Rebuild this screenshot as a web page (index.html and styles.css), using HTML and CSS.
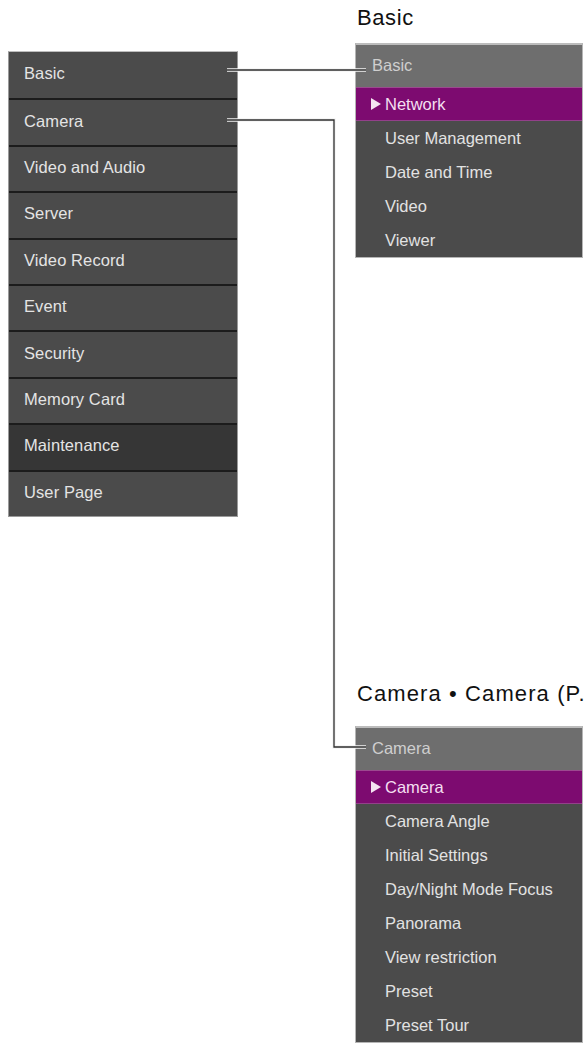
FILE: index.html
```html
<!DOCTYPE html>
<html lang="en">
<head>
<meta charset="utf-8">
<title>Menu structure</title>
<link rel="stylesheet" href="styles.css">
</head>
<body>
<div class="page">
  <nav class="main-menu">
    <div class="main-item">Basic</div>
    <div class="main-item">Camera</div>
    <div class="main-item">Video and Audio</div>
    <div class="main-item">Server</div>
    <div class="main-item">Video Record</div>
    <div class="main-item">Event</div>
    <div class="main-item">Security</div>
    <div class="main-item">Memory Card</div>
    <div class="main-item main-item--active">Maintenance</div>
    <div class="main-item">User Page</div>
  </nav>

  <div class="sub-column">
    <section class="sub-group sub-group--basic">
      <h2 class="sub-title">Basic</h2>
      <div class="sub-panel">
        <div class="sub-header">Basic</div>
        <div class="sub-item sub-item--selected"><span class="arrow"></span>Network</div>
        <div class="sub-item">User Management</div>
        <div class="sub-item">Date and Time</div>
        <div class="sub-item">Video</div>
        <div class="sub-item">Viewer</div>
      </div>
    </section>

    <section class="sub-group sub-group--camera">
      <h2 class="sub-title sub-title--wide">Camera • Camera (P.</h2>
      <div class="sub-panel">
        <div class="sub-header">Camera</div>
        <div class="sub-item sub-item--selected"><span class="arrow"></span>Camera</div>
        <div class="sub-item">Camera Angle</div>
        <div class="sub-item">Initial Settings</div>
        <div class="sub-item">Day/Night Mode Focus</div>
        <div class="sub-item">Panorama</div>
        <div class="sub-item">View restriction</div>
        <div class="sub-item">Preset</div>
        <div class="sub-item">Preset Tour</div>
      </div>
    </section>
  </div>

  <svg class="connectors" width="587" height="1048" viewBox="0 0 587 1048" aria-hidden="true">
    <g fill="none" stroke-linejoin="miter">
      <path class="halo" d="M227 70 H366"/>
      <path class="halo" d="M227 120 H334 V747 H366"/>
      <path class="wire" d="M227 70 H366"/>
      <path class="wire" d="M227 120 H334 V747 H366"/>
    </g>
  </svg>
</div>
</body>
</html>
```

FILE: styles.css
```css
* {
  box-sizing: border-box;
}

html, body {
  margin: 0;
  padding: 0;
  background: #ffffff;
}

body {
  font-family: "Liberation Sans", Arial, sans-serif;
}

.page {
  position: relative;
  width: 587px;
  height: 1048px;
  display: flex;
  align-items: flex-start;
  gap: 117px;
  padding-left: 8px;
}

/* ---------- main menu ---------- */
.main-menu {
  margin-top: 51px;
  width: 230px;
  height: 466px;
  display: grid;
  grid-template-rows: repeat(10, 1fr);
  background: #4b4b4b;
  border: 1px solid #9a9a9a;
  border-top-color: #bdbdbd;
}

.main-item {
  display: flex;
  align-items: center;
  padding: 0 0 3px 15px;
  color: #e4e4e4;
  font-size: 16.5px;
  letter-spacing: 0.1px;
  background: #4b4b4b;
}

.main-item + .main-item {
  border-top: 2px solid #1c1c1c;
}

.main-item--active {
  background: #363636;
}

/* ---------- sub menus ---------- */
.sub-column {
  width: 228px;
  display: flex;
  flex-direction: column;
}

.sub-title {
  margin: 0;
  height: 26px;
  line-height: 26px;
  font-size: 22px;
  font-weight: normal;
  letter-spacing: 0.6px;
  color: #111111;
  padding-left: 2px;
  white-space: nowrap;
}

.sub-title--wide {
  letter-spacing: 1.1px;
}

.sub-group--basic {
  margin-top: 5px;
}

.sub-group--basic .sub-title {
  margin-bottom: 12px;
}

.sub-group--camera {
  margin-top: 423px;
}

.sub-group--camera .sub-title {
  margin-bottom: 19px;
}

.sub-panel {
  background: #4b4b4b;
  border: 1px solid #b5b5b5;
  border-top: 0;
}

.sub-header {
  height: 44px;
  display: flex;
  align-items: center;
  padding-left: 16px;
  padding-bottom: 2px;
  background: #6e6e6e;
  border-top: 2px solid #bcbcbc;
  color: #cfcfcf;
  font-size: 16.5px;
}

.sub-item {
  height: 34px;
  display: flex;
  align-items: center;
  padding-left: 29px;
  color: #e2e2e2;
  font-size: 16.5px;
  white-space: nowrap;
}

.sub-item--selected {
  padding-left: 15px;
  background: #7d0b70;
  border-top: 1px solid #9c4a8f;
  border-bottom: 1px solid #93408a;
  color: #f4dff0;
}

.arrow {
  width: 0;
  height: 0;
  margin-right: 4px;
  border-left: 10px solid #f4e4f1;
  border-top: 6px solid transparent;
  border-bottom: 6px solid transparent;
}

/* ---------- connector lines ---------- */
.connectors {
  position: absolute;
  top: 0;
  left: 0;
  pointer-events: none;
}

.connectors .halo {
  stroke: #f4f4f4;
  stroke-width: 3.5;
}

.connectors .wire {
  stroke: #2e2e2e;
  stroke-width: 1.3;
}
```
